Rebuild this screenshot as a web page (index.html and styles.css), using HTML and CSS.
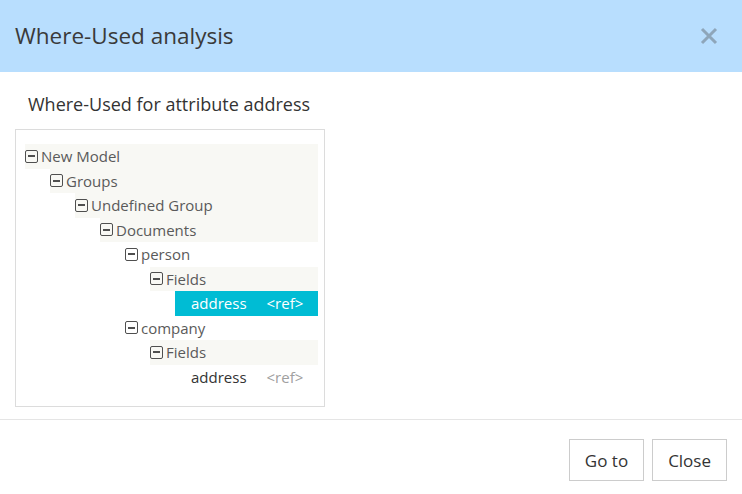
FILE: index.html
```html
<!DOCTYPE html>
<html>
<head>
<meta charset="utf-8">
<link rel="stylesheet" href="styles.css">
</head>
<body>
<div class="modal">
  <div class="modal-header">
    <h4 class="modal-title">Where-Used analysis</h4>
    <button class="close" aria-label="Close">
      <svg width="18" height="18" viewBox="0 0 18 18"><path d="M2 2L16 16M16 2L2 16" stroke="#8ea6ba" stroke-width="3" fill="none"/></svg>
    </button>
  </div>
  <div class="modal-body">
    <div class="subtitle">Where-Used for attribute address</div>
    <div class="tree">
      <ul class="level">
        <li>
          <div class="row shaded"><span class="toggle"></span><span class="label">New Model</span></div>
          <ul class="level">
            <li>
              <div class="row shaded"><span class="toggle"></span><span class="label">Groups</span></div>
              <ul class="level">
                <li>
                  <div class="row shaded"><span class="toggle"></span><span class="label">Undefined Group</span></div>
                  <ul class="level">
                    <li>
                      <div class="row shaded"><span class="toggle"></span><span class="label">Documents</span></div>
                      <ul class="level">
                        <li>
                          <div class="row"><span class="toggle"></span><span class="label">person</span></div>
                          <ul class="level">
                            <li>
                              <div class="row shaded"><span class="toggle"></span><span class="label">Fields</span></div>
                              <ul class="level">
                                <li><div class="row leaf selected"><span class="name">address</span><span class="ref">&lt;ref&gt;</span></div></li>
                              </ul>
                            </li>
                          </ul>
                        </li>
                        <li>
                          <div class="row"><span class="toggle"></span><span class="label">company</span></div>
                          <ul class="level">
                            <li>
                              <div class="row shaded"><span class="toggle"></span><span class="label">Fields</span></div>
                              <ul class="level">
                                <li><div class="row leaf"><span class="name">address</span><span class="ref">&lt;ref&gt;</span></div></li>
                              </ul>
                            </li>
                          </ul>
                        </li>
                      </ul>
                    </li>
                  </ul>
                </li>
              </ul>
            </li>
          </ul>
        </li>
      </ul>
    </div>
  </div>
  <div class="modal-footer">
    <button class="btn">Go to</button>
    <button class="btn">Close</button>
  </div>
</div>
</body>
</html>
```

FILE: styles.css
```css
* { box-sizing: border-box; }
html, body { margin: 0; padding: 0; background: #fff; }
body { font-family: "Open Sans", "Liberation Sans", sans-serif; color: #333; }
.modal { width: 742px; height: 494px; display: flex; flex-direction: column; }
.modal-header {
  height: 72px; background: #b8defe;
  display: flex; align-items: center; justify-content: space-between;
  padding: 0 24px 0 15px;
}
.modal-title { margin: 0; font-size: 22.5px; font-weight: 400; color: #3a3a3a; line-height: 30px; }
.close { background: none; border: 0; padding: 0; width: 18px; height: 18px; display: flex; }
.modal-body { padding: 20px 15px 12px; flex: 1; }
.subtitle { font-size: 18px; line-height: 24px; padding-left: 13px; color: #333; margin-bottom: 13px; }
.tree { width: 310px; height: 278px; border: 1px solid #dcdcdc; padding: 14px 6px 0 9px; }
.level { list-style: none; margin: 0; padding: 0; }
.level .level { padding-left: 25px; }
.row { height: 24.5px; display: flex; align-items: center; font-size: 15px; color: #5a5a5a; }
.row.shaded { background: #f8f8f4; }
.toggle {
  width: 13px; height: 13px; border: 1.8px solid #4f4f4f; border-radius: 2px;
  position: relative; margin-right: 3px; flex: none;
}
.toggle::after {
  content: ""; position: absolute; left: 2px; right: 2px; top: 50%; height: 1.8px; margin-top: -0.9px; background: #4f4f4f;
}
.leaf { padding-left: 16px; color: #333; }
.leaf .ref { margin-left: 20px; color: #a0a0a0; font-size: 15px; }
.leaf.selected { background: #00bcd4; color: #fff; }
.leaf.selected .ref { color: #fff; }
.modal-footer {
  border-top: 1px solid #e5e5e5; padding: 19px 15px 13px;
  display: flex; justify-content: flex-end; gap: 8px;
}
.btn {
  height: 42px; padding: 0 15px; background: #fff; border: 1px solid #ccc;
  font-family: inherit; font-size: 17px; color: #333;
}
```
